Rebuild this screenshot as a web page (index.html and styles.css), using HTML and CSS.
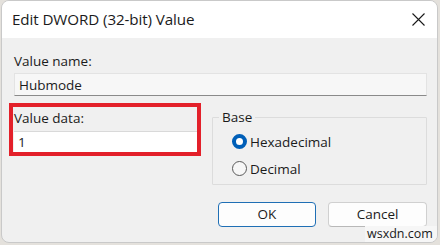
FILE: index.html
```html
<!DOCTYPE html>
<html>
<head>
<meta charset="utf-8">
<link rel="stylesheet" href="styles.css">
</head>
<body>
<div class="window">
  <div class="titlebar">
    <span class="title">Edit DWORD (32-bit) Value</span>
    <svg class="close" width="13" height="13" viewBox="0 0 13 13"><path d="M0.5 0.5 L12.5 12.5 M12.5 0.5 L0.5 12.5" stroke="#1a1a1a" stroke-width="1.1" fill="none"/></svg>
  </div>
  <div class="content">
    <div class="label name-label">Value name:</div>
    <div class="field name-field">Hubmode</div>
    <div class="row">
      <div class="data-col">
        <div class="label">Value data:</div>
        <div class="field data-field">1</div>
        <div class="highlight"></div>
      </div>
      <div class="group">
        <span class="legend">Base</span>
        <div class="radio-row"><span class="radio checked"></span><span>Hexadecimal</span></div>
        <div class="radio-row"><span class="radio"></span><span>Decimal</span></div>
      </div>
    </div>
    <div class="buttons">
      <div class="btn ok">OK</div>
      <div class="btn">Cancel</div>
    </div>
    <div class="watermark">wsxdn.com</div>
  </div>
</div>
</body>
</html>
```

FILE: styles.css
```css
* { box-sizing: border-box; }
html, body { margin: 0; padding: 0; }
body {
  width: 440px;
  height: 245px;
  background: #e4e1dc;
  font-family: "Open Sans", "Noto Sans", sans-serif;
  color: #1b1b1b;
  overflow: hidden;
}
.window {
  margin-left: 1px;
  width: 437px;
  height: 243px;
  border: 1px solid #c9c9c9;
  border-radius: 8px;
  overflow: hidden;
  background: #f0f0f0;
  display: flex;
  flex-direction: column;
}
.titlebar {
  height: 37px;
  background: #ffffff;
  display: flex;
  align-items: center;
  padding: 0 12px 0 10px;
  flex: none;
}
.title {
  font-size: 15.2px;
  letter-spacing: -0.1px;
  flex: 1;
  padding-bottom: 1px;
}
.close { margin-bottom: 1px; }
.content {
  position: relative;
  flex: 1;
  padding: 13px 10px 0 12px;
  font-size: 13.5px;
}
.label {
  height: 20px;
  line-height: 20px;
}
.field {
  background: #fbfbfb;
  height: 23px;
  line-height: 22px;
  padding-left: 4px;
  border: 1px solid #e3e3e3;
  border-bottom: 1px solid #8a8a8a;
  margin-top: 2px;
}
.name-field { background: #f7f7f7; }
.row {
  display: flex;
  align-items: flex-start;
  margin-top: 7px;
  gap: 15px;
}
.data-col {
  position: relative;
  width: 183px;
  padding-top: 5px;
}
.data-field {
  background: #ffffff;
  border: none;
  border-top: 1px solid #d9d9d9;
  height: 21px;
  margin-top: 3px;
  line-height: 20px;
}
.highlight {
  position: absolute;
  left: -5px;
  top: 0px;
  width: 192px;
  height: 53px;
  border: 4px solid #e3202a;
}
.group {
  position: relative;
  flex: 1;
  margin-top: 14px;
  height: 68px;
  border: 1px solid #dcdcdc;
  border-radius: 1px;
  padding: 10px 0 0 19px;
}
.legend {
  position: absolute;
  top: -11px;
  left: 6px;
  padding: 0 3px;
  background: #f0f0f0;
  line-height: 20px;
}
.radio-row {
  display: flex;
  align-items: center;
  gap: 3px;
  height: 27px;
}
.radio {
  width: 15px;
  height: 15px;
  border-radius: 50%;
  border: 1px solid #5a5a5a;
  background: #f7f7f7;
  flex: none;
}
.radio.checked {
  border: 4.5px solid #005fb8;
  background: #ffffff;
}
.buttons {
  display: flex;
  justify-content: flex-end;
  gap: 12px;
  margin-top: 17px;
}
.btn {
  width: 99px;
  height: 25px;
  border: 1px solid #d0d0d0;
  border-bottom-color: #b8b8b8;
  border-radius: 4px;
  background: #fdfdfd;
  text-align: center;
  line-height: 23px;
}
.btn.ok {
  width: 98px;
  border: 1px solid #1f6fb5;
}
.watermark {
  position: absolute;
  right: 0;
  bottom: 0;
  width: 72px;
  height: 16px;
  background: #f6f6f6;
  font-size: 12.5px;
  line-height: 15px;
  padding-left: 2px;
  color: #1a1a1a;
}
```
